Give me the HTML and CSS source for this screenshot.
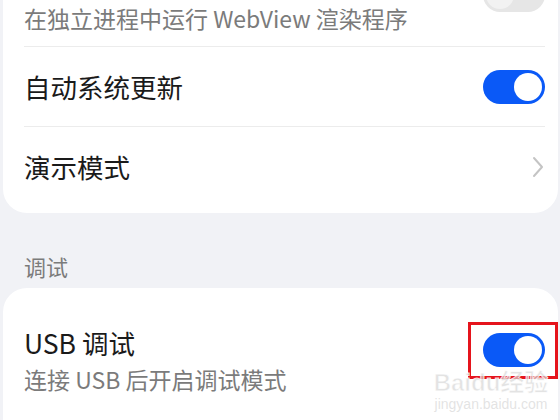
FILE: index.html
```html
<!DOCTYPE html>
<html>
<head>
  <title>开发者选项</title>
  <link rel="stylesheet" href="styles.css">
</head>
<body>
  <div class="card first">
    <div class="row row-top">
      <div class="text">
        <p class="sub">在独立进程中运行 WebView 渲染程序</p>
      </div>
      <div class="switch off top-switch"><div class="knob"></div></div>
    </div>
    <div class="line"></div>
    <div class="row row-mid">
      <div class="text">
        <p class="title">自动系统更新</p>
      </div>
      <div class="switch on"><div class="knob"></div></div>
    </div>
    <div class="line"></div>
    <div class="row row-last">
      <div class="text">
        <p class="title">演示模式</p>
      </div>
      <svg class="chevron" width="12" height="22" viewBox="0 0 12 22">
        <path d="M2 2 L10 11 L2 20" fill="none" stroke="#c4c4c4" stroke-width="2" stroke-linecap="round" stroke-linejoin="round"/>
      </svg>
    </div>
  </div>

  <div class="section">调试</div>

  <div class="card second">
    <div class="row row-usb">
      <div class="text">
        <p class="title usb-title">USB 调试</p>
        <p class="sub">连接 USB 后开启调试模式</p>
      </div>
      <div class="switch on usb-switch"><div class="knob"></div></div>
    </div>
    <div class="mark"></div>
    <div class="watermark">
      <span class="wm-logo">Baidu经验</span>
      <span class="wm-url">jingyan.baidu.com</span>
    </div>
  </div>
</body>
</html>
```

FILE: styles.css
```css
body {
  margin: 0;
  padding: 0 2px 0 3px;
  background-color: #f1f2f6;
  font-family: "Noto Sans CJK SC", "Noto Sans", sans-serif;
  overflow: hidden;
  height: 420px;
  box-sizing: border-box;
}

p {
  margin: 0;
}

.card {
  background-color: #fff;
  border-radius: 24px;
}

.first {
  margin-top: -40px;
  padding-bottom: 6px;
}

.second {
  position: relative;
  height: 132px;
  padding-top: 39px;
  box-sizing: border-box;
  border-radius: 24px 24px 0 0;
}

.row {
  display: flex;
  align-items: center;
  justify-content: space-between;
  padding: 0 13px 0 21px;
}

.row-top {
  height: 86px;
  align-items: flex-end;
}

.row-top .text {
  padding-bottom: 13px;
}

.row-mid {
  height: 79px;
}

.row-last {
  height: 80px;
}

.row-usb {
  align-items: flex-start;
}

.line {
  height: 1px;
  background-color: #ececec;
  margin: 0 13px 0 21px;
}

.title {
  font-size: 26.5px;
  line-height: 32px;
  color: #1a1a1a;
}

.usb-title {
  margin-bottom: 5px;
}

.sub {
  font-size: 23px;
  line-height: 30px;
  color: #7b7b7b;
}

.switch {
  width: 62px;
  height: 34px;
  border-radius: 17px;
  box-sizing: border-box;
  padding: 3px;
  display: flex;
}

.switch .knob {
  width: 28px;
  height: 28px;
  border-radius: 50%;
  background-color: #fff;
}

.switch.on {
  background-color: #0a59f7;
  justify-content: flex-end;
}

.switch.off {
  background-color: #e6e6e6;
}

.switch.off .knob {
  background-color: #f2f2f2;
}

.top-switch {
  align-self: flex-start;
  margin-top: 18px;
}

.usb-switch {
  margin-top: 6px;
}

.chevron {
  margin-right: 1px;
}

.section {
  padding: 40px 21px 9px;
  font-size: 22px;
  line-height: 26px;
  color: #7b7b7b;
}

.mark {
  position: absolute;
  top: 34px;
  left: 465px;
  width: 90px;
  height: 57px;
  border: 3px solid #e5141c;
  box-sizing: border-box;
}

.watermark {
  position: absolute;
  top: 82px;
  left: 428px;
  width: 120px;
  display: flex;
  flex-direction: column;
  align-items: center;
  color: rgba(215, 215, 215, 0.7);
  font-family: "Liberation Sans", "Noto Sans CJK SC", sans-serif;
  white-space: nowrap;
  pointer-events: none;
}

.wm-logo {
  font-size: 24px;
  line-height: 26px;
  font-weight: bold;
  -webkit-text-stroke: 1px rgba(255, 255, 255, 0.8);
}

.wm-url {
  font-size: 14px;
  line-height: 16px;
}
```
